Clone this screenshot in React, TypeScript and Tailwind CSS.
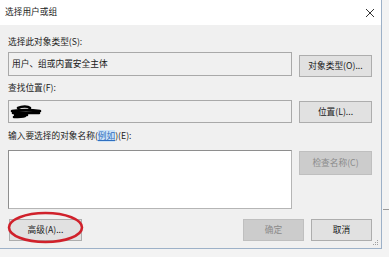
import React from "react";

const font = { fontFamily: '"Noto Sans CJK SC", "Noto Sans", sans-serif' };

const Btn = ({
  label,
  disabled,
  className = "",
}: {
  label: string;
  disabled?: boolean;
  className?: string;
}) => (
  <div
    className={`flex items-center justify-center border text-[8.7px] leading-none ${
      disabled
        ? "bg-[#cccccc] border-[#bfbfbf] text-[#8a8a8a]"
        : "bg-[#e1e1e1] border-[#adadad] text-[#1a1a1a]"
    } ${className}`}
  >
    {label}
  </div>
);

// black marker stroke that hides the location name
const Redaction = () => (
  <svg width="32" height="14" viewBox="0 0 32 14">
    <path
      d="M8 3 C12 1, 18 1, 20 3 M2 6 C10 5, 22 5, 30 6 M3 8 C12 8, 22 8, 29 8 M5 10 C10 10, 14 10, 17 10 M4 12 C8 12, 12 12, 15 11"
      stroke="#000"
      strokeWidth="2.6"
      strokeLinecap="round"
      fill="none"
    />
  </svg>
);

export default function App() {
  return (
    <div
      className="relative w-[389px] h-[257px] overflow-hidden bg-[#f3f3f3]"
      style={font}
    >
      {/* bits of the page behind the dialog */}
      <div className="absolute left-[383px] top-[209px] h-px w-[6px] bg-[#9a9a9a]" />

      <div className="w-[382px] h-[249px] flex flex-col border-r border-b border-[#9db1c8] bg-[#f0f0f0]">
        {/* title bar */}
        <div className="h-[25px] shrink-0 bg-white flex items-center justify-between pl-[5px] pr-[5px]">
          <span className="text-[8.7px] text-[#1a1a1a] leading-none">选择用户或组</span>
          <svg width="10" height="10" viewBox="0 0 10 10" className="mr-[1px]">
            <path d="M1 1 L9 9 M9 1 L1 9" stroke="#333" strokeWidth="1" />
          </svg>
        </div>

        <div className="relative flex-1 flex flex-col pl-[8px] pr-[9px] text-[8.7px] text-[#1a1a1a]">
          <div className="mt-[11px] h-[12px] leading-[12px]">选择此对象类型(S):</div>
          <div className="mt-[4px] flex justify-between items-start h-[25px]">
            <div className="w-[284px] h-[24px] border border-[#a9a9a9] flex items-center pl-[3px] leading-none">
              用户、组或内置安全主体
            </div>
            <Btn label="对象类型(O)..." className="mt-[3px] w-[73px] h-[22px]" />
          </div>

          <div className="mt-[5px] h-[12px] leading-[12px]">查找位置(F):</div>
          <div className="mt-[6px] flex justify-between items-start h-[23px]">
            <div className="w-[284px] h-[23px] border border-[#a9a9a9] flex items-center pl-[1px]">
              <Redaction />
            </div>
            <Btn label="位置(L)..." className="mt-[1px] w-[73px] h-[22px]" />
          </div>

          <div className="mt-[7px] h-[12px] leading-[12px] flex">
            <span>输入要选择的对象名称(</span>
            <span className="bg-[#cde3f7] text-[#2f6fc0] underline">例如</span>
            <span>)(E):</span>
          </div>
          <div className="mt-[8px] flex justify-between items-start h-[59px]">
            <div className="w-[284px] h-[59px] bg-white border border-[#8e8e8e] border-b-[#b5b5b5] border-r-[#b5b5b5]" />
            <Btn label="检查名称(C)" disabled className="mt-[1px] w-[73px] h-[24px]" />
          </div>

          <div className="mt-[10px] flex justify-between items-center">
            <Btn label="高级(A)..." className="ml-[1px] w-[73px] h-[22px]" />
            <div className="flex gap-[7px]">
              <Btn label="确定" disabled className="w-[61px] h-[22px]" />
              <Btn label="取消" className="w-[61px] h-[22px]" />
            </div>
          </div>

          {/* red annotation drawn over the Advanced button */}
          <svg
            className="absolute left-[7px] top-[186px]"
            width="78"
            height="33"
            viewBox="0 0 78 33"
          >
            <ellipse cx="38.5" cy="16.5" rx="36.5" ry="14.5" stroke="#d0212b" strokeWidth="2.6" fill="none" />
          </svg>

          {/* size grip */}
          <svg className="absolute right-[2px] bottom-[2px]" width="6" height="6" viewBox="0 0 6 6">
            <rect x="4" y="0" width="1" height="1" fill="#a0a0a0" />
            <rect x="2" y="2" width="1" height="1" fill="#a0a0a0" />
            <rect x="4" y="2" width="1" height="1" fill="#a0a0a0" />
            <rect x="0" y="4" width="1" height="1" fill="#a0a0a0" />
            <rect x="2" y="4" width="1" height="1" fill="#a0a0a0" />
            <rect x="4" y="4" width="1" height="1" fill="#a0a0a0" />
          </svg>
        </div>
      </div>
    </div>
  );
}
